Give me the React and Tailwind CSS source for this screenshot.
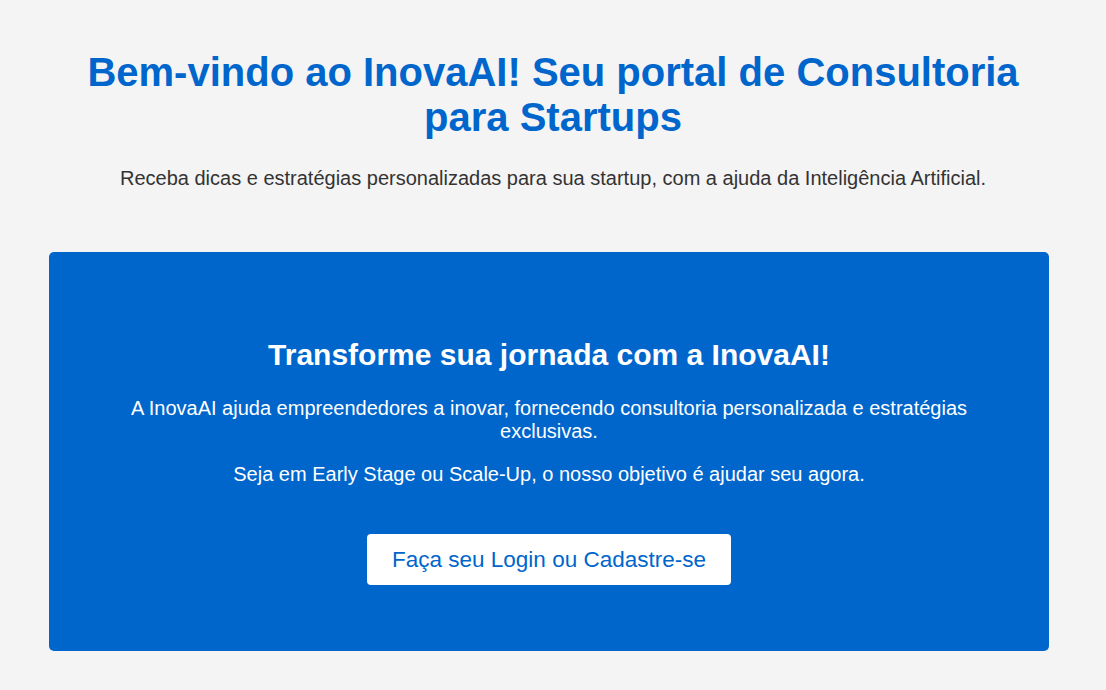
import React from "react";

export default function App() {
  return (
    <div className="min-h-screen bg-[#f4f4f4] font-['Liberation_Sans',Arial,sans-serif] pt-[50px] pb-10">
      {/* HEADER */}
      <header className="text-center px-[49px]">
        <h1 className="text-[40px] leading-[45px] font-bold text-[#0066cc] max-w-[960px] mx-auto">
          Bem-vindo ao InovaAI! Seu portal de Consultoria para Startups
        </h1>
        <p className="mt-[27px] text-[20px] leading-[23px] text-[#333333]">
          Receba dicas e estratégias personalizadas para sua startup, com a
          ajuda da Inteligência Artificial.
        </p>
      </header>

      {/* HERO CARD */}
      <section className="mt-[62px] mx-[49px] w-[1000px] bg-[#0066cc] rounded-[5px] px-10 pt-[86px] pb-[66px] text-center text-white">
        <h2 className="text-[30px] leading-[34px] font-bold">
          Transforme sua jornada com a InovaAI!
        </h2>
        <p className="mt-[25px] text-[20px] leading-[23px]">
          A InovaAI ajuda empreendedores a inovar, fornecendo consultoria
          personalizada e estratégias exclusivas.
        </p>
        <p className="mt-[20px] text-[20px] leading-[23px]">
          Seja em Early Stage ou Scale-Up, o nosso objetivo é ajudar seu agora.
        </p>
        <button className="mt-[48px] w-[364px] h-[51px] bg-white text-[#0066cc] text-[22.5px] rounded-[4px]">
          Faça seu Login ou Cadastre-se
        </button>
      </section>
    </div>
  );
}
